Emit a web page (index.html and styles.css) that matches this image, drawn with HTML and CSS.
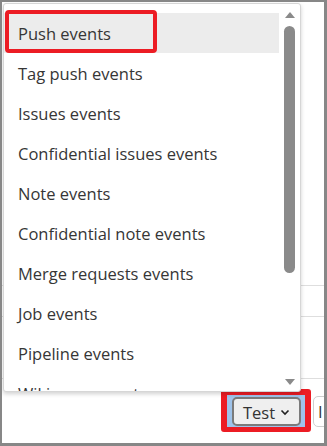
FILE: index.html
```html
<!DOCTYPE html>
<html>
<head>
<meta charset="utf-8">
<title>Webhook events</title>
<link rel="stylesheet" href="styles.css">
</head>
<body>
<div class="frame">
  <div class="page">
    <div class="block block-top"></div>
    <div class="block block-mid"></div>
    <div class="block block-low"></div>
    <div class="actions">
      <div class="mark mark-test">
        <div class="focus">
          <button class="btn btn-test">Test
            <svg class="chev" width="10" height="7" viewBox="0 0 10 7"><path d="M1.5 1.5 L5 5 L8.5 1.5" fill="none" stroke="#222" stroke-width="1.6"/></svg>
          </button>
        </div>
      </div>
      <button class="btn btn-next">I</button>
    </div>
  </div>

  <div class="menu">
    <ul class="list">
      <li class="item active">Push events</li>
      <li class="item">Tag push events</li>
      <li class="item">Issues events</li>
      <li class="item">Confidential issues events</li>
      <li class="item">Note events</li>
      <li class="item">Confidential note events</li>
      <li class="item">Merge requests events</li>
      <li class="item">Job events</li>
      <li class="item">Pipeline events</li>
      <li class="item">Wiki page events</li>
    </ul>
    <div class="scroll">
      <svg class="arrow up" width="10" height="6" viewBox="0 0 10 6"><path d="M0 6 L5 0 L10 6 Z" fill="#8a8a8a"/></svg>
      <div class="thumb"></div>
      <div class="spacer"></div>
      <svg class="arrow down" width="10" height="6" viewBox="0 0 10 6"><path d="M0 0 L5 6 L10 0 Z" fill="#8a8a8a"/></svg>
    </div>
  </div>
  <div class="mark mark-push"></div>
</div>
</body>
</html>
```

FILE: styles.css
```css
html, body {
	margin: 0;
	padding: 0;
	background: #fff;
}
.frame {
	position: relative;
	width: 327px;
	height: 446px;
	box-sizing: border-box;
	border-style: solid;
	border-color: #878787;
	border-width: 2px 3px 3px 2px;
	overflow: hidden;
	background: #fff;
	font-family: "Open Sans", "Noto Sans", sans-serif;
	color: #363636;
}
.page {
	display: flex;
	flex-direction: column;
}
.block {
	border-bottom: 1px solid #dedede;
}
.block-top { height: 283px; }
.block-mid { height: 30px; }
.block-low { height: 61px; }
.actions {
	display: flex;
	align-items: flex-start;
	gap: 2px;
	padding: 10px 0 0 219px;
}
.mark {
	border: 6px solid #ec1c24;
	border-radius: 3px;
}
.mark-test {
	flex-shrink: 0;
	width: 78px;
	height: 32px;
	border-bottom-width: 5px;
}
.focus {
	height: 100%;
	background: #9fc3ea;
	padding: 2px 0 0 5px;
	box-sizing: border-box;
}
.btn {
	font-family: inherit;
	font-size: 16.5px;
	color: #333;
	box-sizing: border-box;
	border-radius: 5px;
	padding: 0;
	cursor: pointer;
}
.btn-test {
	display: flex;
	align-items: center;
	justify-content: center;
	gap: 5px;
	width: 69px;
	height: 29px;
	padding-top: 1px;
	background: #efefef;
	border: 2px solid #7b7b7b;
}
.btn-next {
	flex-shrink: 0;
	margin-top: 7px;
	width: 50px;
	height: 31px;
	text-align: left;
	padding-left: 4px;
	background: #fff;
	border: 1px solid #cfcfcf;
}
.menu {
	position: absolute;
	left: 1px;
	top: 1px;
	width: 298px;
	height: 389px;
	box-sizing: border-box;
	border: 1px solid #d6d6d6;
	border-radius: 3px;
	background: #fff;
	box-shadow: 0 2px 4px rgba(0, 0, 0, 0.18);
	display: flex;
	overflow: hidden;
}
.list {
	flex: 1;
	list-style: none;
	margin: 0;
	padding: 9px 0 0;
	overflow: hidden;
}
.item {
	height: 40px;
	box-sizing: border-box;
	padding: 2px 0 0 14px;
	line-height: 38px;
	font-size: 16.5px;
	white-space: nowrap;
}
.item.active {
	background: #ececec;
}
.scroll {
	width: 21px;
	display: flex;
	flex-direction: column;
	align-items: center;
	padding: 8px 0 6px;
	box-sizing: border-box;
}
.thumb {
	margin-top: 8px;
	width: 11px;
	height: 247px;
	border-radius: 6px;
	background: #8a8a8a;
}
.spacer { flex: 1; }
.mark-push {
	position: absolute;
	left: 3px;
	top: 8px;
	width: 152px;
	height: 43px;
	box-sizing: border-box;
	border-width: 4px;
	border-radius: 4px;
}
```
